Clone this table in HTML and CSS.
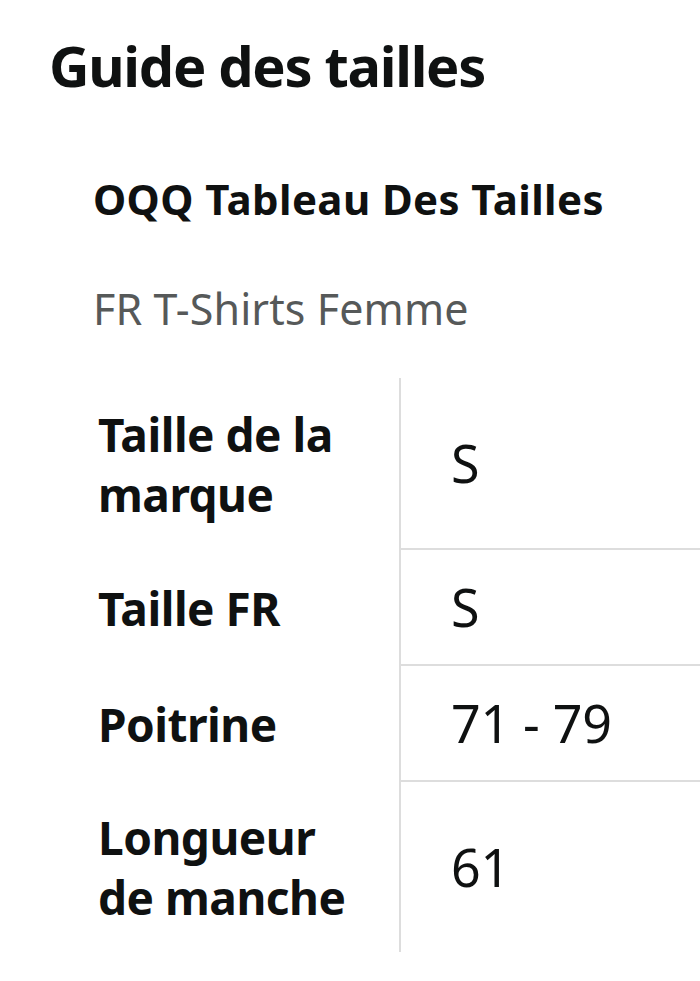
FILE: index.html
```html
<!DOCTYPE html>
<html lang="fr">
<head>
<meta charset="utf-8">
<title>Guide des tailles</title>
<link rel="stylesheet" href="styles.css">
</head>
<body>
<main class="page">
  <h1 class="title">Guide des tailles</h1>
  <section class="chart">
    <h2 class="chart-title">OQQ Tableau Des Tailles</h2>
    <p class="chart-sub">FR T-Shirts Femme</p>
    <table class="sizes">
      <tbody>
        <tr>
          <th class="label">Taille de la<br>marque</th>
          <td class="value">S</td>
        </tr>
        <tr>
          <th class="label">Taille FR</th>
          <td class="value">S</td>
        </tr>
        <tr>
          <th class="label">Poitrine</th>
          <td class="value">71 - 79</td>
        </tr>
        <tr>
          <th class="label">Longueur<br>de manche</th>
          <td class="value last">61</td>
        </tr>
      </tbody>
    </table>
  </section>
</main>
</body>
</html>
```

FILE: styles.css
```css
html, body {
  margin: 0;
  padding: 0;
  background: #ffffff;
}

body {
  font-family: "Noto Sans", "Open Sans", "DejaVu Sans", sans-serif;
  color: #0f1111;
}

.page {
  padding: 33px 0 0 49px;
}

.title {
  margin: 0;
  font-size: 56px;
  line-height: 64px;
  font-weight: 700;
  letter-spacing: -1.3px;
}

.chart {
  margin: 77px 0 0 44px;
}

.chart-title {
  margin: 0;
  font-size: 42px;
  line-height: 50px;
  font-weight: 700;
  letter-spacing: 0.4px;
}

.chart-sub {
  margin: 60px 0 0 0;
  font-size: 43px;
  line-height: 50px;
  font-weight: 400;
  color: #565959;
  letter-spacing: 0.1px;
}

.sizes {
  margin-top: 44px;
  border-collapse: separate;
  border-spacing: 0;
  width: 607px;
}

.label {
  width: 301px;
  padding: 26px 0 26px 5px;
  text-align: left;
  vertical-align: middle;
  font-size: 46px;
  line-height: 60px;
  font-weight: 700;
  letter-spacing: -0.5px;
}

.sizes tr:nth-child(2) .label,
.sizes tr:nth-child(3) .label {
  padding-top: 28px;
  padding-bottom: 28px;
}

.sizes tr:nth-child(4) .label {
  padding-top: 25px;
  padding-bottom: 25px;
}

.value {
  padding: 0 0 0 50px;
  vertical-align: middle;
  font-size: 52px;
  line-height: 60px;
  font-weight: 400;
  border-left: 2px solid #dddddd;
  border-bottom: 2px solid #dddddd;
  letter-spacing: -0.3px;
}

.value.last {
  border-bottom: none;
}
```
